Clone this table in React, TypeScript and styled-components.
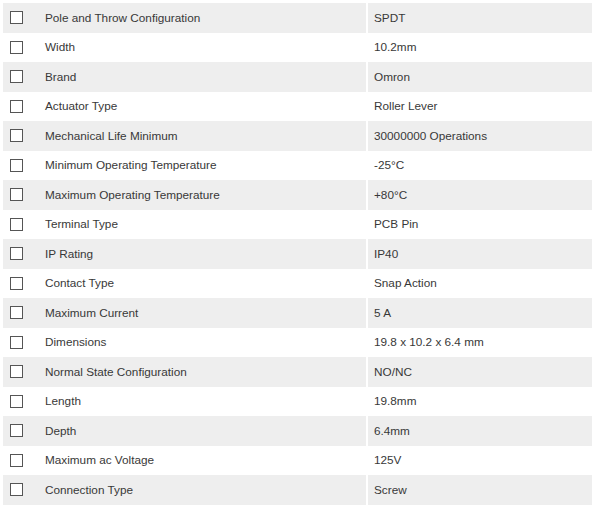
import { FC } from "react";
import styled, { createGlobalStyle } from "styled-components";

const GlobalStyle = createGlobalStyle`
  body {
    margin: 0;
    background-color: #ffffff;
    font-family: "Liberation Sans", Arial, sans-serif;
  }
`;

const Wrapper = styled.div`
  padding: 3px 8px 0 3px;
`;

const Table = styled.table`
  width: 589px;
  border-collapse: separate;
  border-spacing: 0;
  table-layout: fixed;
  font-size: 11.75px;
  color: #383838;
`;

const Row = styled.tr<{ $shaded: boolean }>`
  height: 29.5px;
  background-color: ${(p) => (p.$shaded ? "#eeeeee" : "#ffffff")};
`;

const CheckCell = styled.td`
  width: 32px;
  padding: 0 0 0 7px;
  vertical-align: middle;
  box-sizing: border-box;
`;

const LabelCell = styled.td`
  width: 331px;
  padding: 0 0 1px 10px;
  box-sizing: border-box;
  vertical-align: middle;
`;

const ValueCell = styled.td`
  padding: 0 0 1px 6px;
  border-left: 2px solid #ffffff;
  vertical-align: middle;
`;

const Box = styled.span`
  display: block;
  width: 11px;
  height: 11px;
  border: 1px solid #555555;
  background-color: #ffffff;
`;

const specs: [string, string][] = [
  ["Pole and Throw Configuration", "SPDT"],
  ["Width", "10.2mm"],
  ["Brand", "Omron"],
  ["Actuator Type", "Roller Lever"],
  ["Mechanical Life Minimum", "30000000 Operations"],
  ["Minimum Operating Temperature", "-25°C"],
  ["Maximum Operating Temperature", "+80°C"],
  ["Terminal Type", "PCB Pin"],
  ["IP Rating", "IP40"],
  ["Contact Type", "Snap Action"],
  ["Maximum Current", "5 A"],
  ["Dimensions", "19.8 x 10.2 x 6.4 mm"],
  ["Normal State Configuration", "NO/NC"],
  ["Length", "19.8mm"],
  ["Depth", "6.4mm"],
  ["Maximum ac Voltage", "125V"],
  ["Connection Type", "Screw"],
];

const App: FC = () => {
  return (
    <>
      <GlobalStyle />
      <Wrapper>
        <Table>
          <tbody>
            {specs.map(([label, value], i) => (
              <Row key={label} $shaded={i % 2 === 0}>
                <CheckCell>
                  <Box />
                </CheckCell>
                <LabelCell>{label}</LabelCell>
                <ValueCell>{value}</ValueCell>
              </Row>
            ))}
          </tbody>
        </Table>
      </Wrapper>
    </>
  );
};

export default App;
